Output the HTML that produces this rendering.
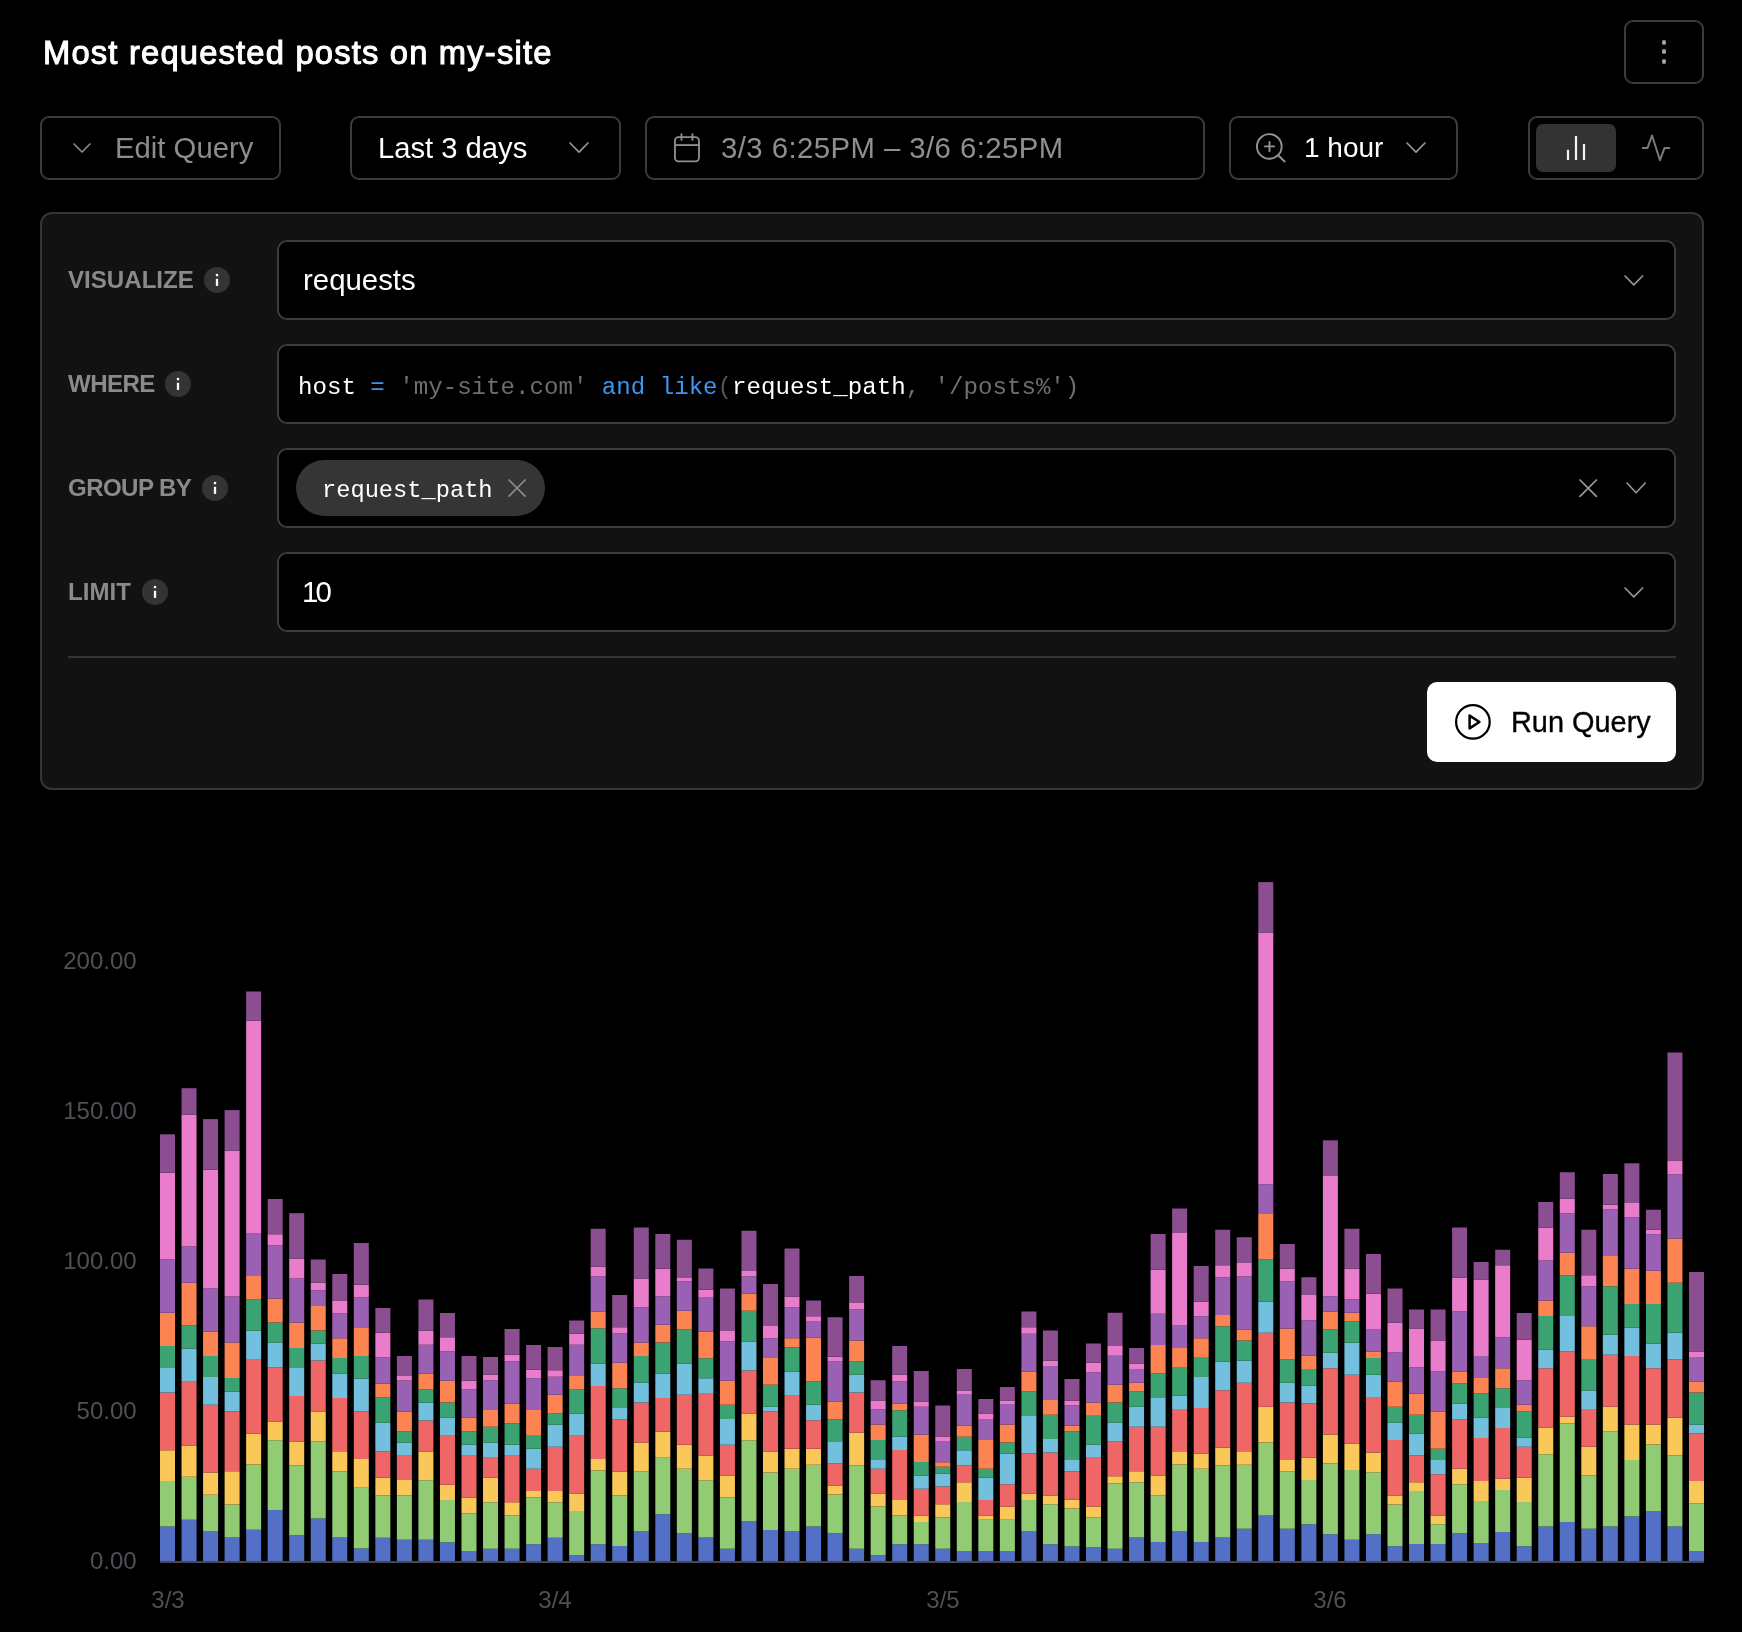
<!DOCTYPE html>
<html><head><meta charset="utf-8"><style>
html,body{margin:0;padding:0;background:#000;}
body{width:1742px;height:1632px;position:relative;overflow:hidden;font-family:"Liberation Sans",sans-serif;}
.t{position:absolute;white-space:nowrap;will-change:transform;}
.b{position:absolute;}
.i{position:absolute;overflow:visible;}
</style></head><body>
<div class="t" style="left:42.80px;top:36.72px;font-size:32.7px;line-height:32.7px;color:#ffffff;font-weight:400;font-family:'Liberation Sans', sans-serif;-webkit-text-stroke:1.05px #fff;letter-spacing:1.2px;">Most requested posts on my-site</div>
<div class="b" style="left:1624.00px;top:20.00px;width:80.00px;height:64.00px;border:2px solid #3b3b3b;border-radius:9px;box-sizing:border-box;"></div>
<div class="b" style="left:1661.55px;top:40.15px;width:4.9px;height:4.9px;border-radius:50%;background:#a4a4a4"></div>
<div class="b" style="left:1661.55px;top:49.45px;width:4.9px;height:4.9px;border-radius:50%;background:#a4a4a4"></div>
<div class="b" style="left:1661.55px;top:58.95px;width:4.9px;height:4.9px;border-radius:50%;background:#a4a4a4"></div>
<div class="b" style="left:40.00px;top:116.00px;width:241.00px;height:64.00px;border:2px solid #3b3b3b;border-radius:9px;box-sizing:border-box;"></div>
<svg class="i" style="left:71.00px;top:141.00px" width="22" height="14" viewBox="0 0 22 14" ><polyline points="3,3 11.0,11 19,3" fill="none" stroke="#8a8a8a" stroke-width="1.7" stroke-linecap="round" stroke-linejoin="round"/></svg>
<div class="t" style="left:115.00px;top:132.90px;font-size:29.3px;line-height:29.3px;color:#8c8c8c;font-weight:400;font-family:'Liberation Sans', sans-serif;">Edit Query</div>
<div class="b" style="left:350.00px;top:116.00px;width:271.00px;height:64.00px;border:2px solid #3b3b3b;border-radius:9px;box-sizing:border-box;"></div>
<div class="t" style="left:377.50px;top:133.58px;font-size:29.2px;line-height:29.2px;color:#ffffff;font-weight:400;font-family:'Liberation Sans', sans-serif;">Last 3 days</div>
<svg class="i" style="left:567.00px;top:140.10px" width="24" height="15.200000000000017" viewBox="0 0 24 15.200000000000017" ><polyline points="3,3 12.0,12.200000000000017 21,3" fill="none" stroke="#969696" stroke-width="1.65" stroke-linecap="round" stroke-linejoin="round"/></svg>
<div class="b" style="left:645.00px;top:116.00px;width:560.00px;height:64.00px;border:2px solid #3b3b3b;border-radius:9px;box-sizing:border-box;"></div>
<svg class="i" style="left:671.00px;top:132.00px" width="32" height="32" viewBox="0 0 32 32" ><rect x="3.95" y="5.1" width="24.05" height="24.3" rx="3.6" fill="none" stroke="#8f8f8f" stroke-width="1.85"/><line x1="4" y1="13.1" x2="28" y2="13.1" stroke="#8f8f8f" stroke-width="1.85"/><line x1="10.5" y1="2.2" x2="10.5" y2="7.9" stroke="#8f8f8f" stroke-width="1.85" stroke-linecap="round"/><line x1="21.4" y1="2.2" x2="21.4" y2="7.9" stroke="#8f8f8f" stroke-width="1.85" stroke-linecap="round"/></svg>
<div class="t" style="left:720.50px;top:133.00px;font-size:29.3px;line-height:29.3px;color:#8f8f8f;font-weight:400;font-family:'Liberation Sans', sans-serif;letter-spacing:0.45px;">3/3 6:25PM – 3/6 6:25PM</div>
<div class="b" style="left:1229.00px;top:116.00px;width:229.00px;height:64.00px;border:2px solid #3b3b3b;border-radius:9px;box-sizing:border-box;"></div>
<svg class="i" style="left:1254.00px;top:131.00px" width="32" height="32" viewBox="0 0 32 32" ><circle cx="15.3" cy="15.45" r="12.35" fill="none" stroke="#939393" stroke-width="1.9"/><line x1="24.1" y1="24.3" x2="30.6" y2="30.5" stroke="#939393" stroke-width="1.9" stroke-linecap="round"/><line x1="15.5" y1="10.85" x2="15.5" y2="20.35" stroke="#939393" stroke-width="1.9" stroke-linecap="round"/><line x1="10.75" y1="15.4" x2="20.15" y2="15.4" stroke="#939393" stroke-width="1.9" stroke-linecap="round"/></svg>
<div class="t" style="left:1303.50px;top:134.10px;font-size:28.0px;line-height:28.0px;color:#ffffff;font-weight:400;font-family:'Liberation Sans', sans-serif;">1 hour</div>
<svg class="i" style="left:1404.00px;top:140.10px" width="24" height="15.200000000000017" viewBox="0 0 24 15.200000000000017" ><polyline points="3,3 12.0,12.200000000000017 21,3" fill="none" stroke="#969696" stroke-width="1.65" stroke-linecap="round" stroke-linejoin="round"/></svg>
<div class="b" style="left:1528.00px;top:116.00px;width:176.00px;height:64.00px;border:2px solid #3b3b3b;border-radius:9px;box-sizing:border-box;"></div>
<div class="b" style="left:1536.00px;top:124.00px;width:80.00px;height:47.50px;background:#333333;border-radius:7px;"></div>
<svg class="i" style="left:1560.00px;top:130.00px" width="30" height="34" viewBox="1560 130 30 34" ><line x1="1568" y1="149.8" x2="1568" y2="160" stroke="#f2f2f2" stroke-width="2.2"/><line x1="1576" y1="136" x2="1576" y2="160" stroke="#f2f2f2" stroke-width="2.2"/><line x1="1584" y1="144" x2="1584" y2="160" stroke="#f2f2f2" stroke-width="2.2"/></svg>
<svg class="i" style="left:1636.00px;top:130.00px" width="40" height="34" viewBox="1636 130 40 34" ><polyline points="1642,148 1647.5,148 1652,135.5 1660,160.2 1664.5,148 1670,148" fill="none" stroke="#7a7a7a" stroke-width="2" stroke-linejoin="round" stroke-linecap="butt"/></svg>
<div class="b" style="left:40.00px;top:212.00px;width:1664.00px;height:577.50px;background:#121212;border:2px solid #353535;border-radius:12px;box-sizing:border-box;"></div>
<div class="b" style="left:276.50px;top:240.00px;width:1399.00px;height:80.00px;background:#000;border:2px solid #3c3c3c;border-radius:10px;box-sizing:border-box;"></div>
<div class="b" style="left:276.50px;top:344.00px;width:1399.00px;height:80.00px;background:#000;border:2px solid #3c3c3c;border-radius:10px;box-sizing:border-box;"></div>
<div class="b" style="left:276.50px;top:448.00px;width:1399.00px;height:80.00px;background:#000;border:2px solid #3c3c3c;border-radius:10px;box-sizing:border-box;"></div>
<div class="b" style="left:276.50px;top:552.00px;width:1399.00px;height:80.00px;background:#000;border:2px solid #3c3c3c;border-radius:10px;box-sizing:border-box;"></div>
<div class="t" style="left:68.30px;top:268.00px;font-size:24.1px;line-height:24.1px;color:#8a8a8a;font-weight:700;font-family:'Liberation Sans', sans-serif;">VISUALIZE</div>
<svg class="i" style="left:204.00px;top:267.00px" width="26" height="26" viewBox="0 0 26 26" ><circle cx="13" cy="13" r="13" fill="#343434"/><rect x="11.85" y="11.8" width="2.3" height="7.1" fill="#ffffff"/><rect x="11.85" y="6.9" width="2.3" height="2.3" fill="#ffffff"/></svg>
<div class="t" style="left:68.30px;top:371.90px;font-size:24.1px;line-height:24.1px;color:#8a8a8a;font-weight:700;font-family:'Liberation Sans', sans-serif;letter-spacing:-0.6px;">WHERE</div>
<svg class="i" style="left:165.00px;top:370.70px" width="26" height="26" viewBox="0 0 26 26" ><circle cx="13" cy="13" r="13" fill="#343434"/><rect x="11.85" y="11.8" width="2.3" height="7.1" fill="#ffffff"/><rect x="11.85" y="6.9" width="2.3" height="2.3" fill="#ffffff"/></svg>
<div class="t" style="left:68.30px;top:475.70px;font-size:24.1px;line-height:24.1px;color:#8a8a8a;font-weight:700;font-family:'Liberation Sans', sans-serif;letter-spacing:-0.6px;">GROUP BY</div>
<svg class="i" style="left:202.00px;top:475.00px" width="26" height="26" viewBox="0 0 26 26" ><circle cx="13" cy="13" r="13" fill="#343434"/><rect x="11.85" y="11.8" width="2.3" height="7.1" fill="#ffffff"/><rect x="11.85" y="6.9" width="2.3" height="2.3" fill="#ffffff"/></svg>
<div class="t" style="left:68.30px;top:580.20px;font-size:24.1px;line-height:24.1px;color:#8a8a8a;font-weight:700;font-family:'Liberation Sans', sans-serif;">LIMIT</div>
<svg class="i" style="left:142.00px;top:579.00px" width="26" height="26" viewBox="0 0 26 26" ><circle cx="13" cy="13" r="13" fill="#343434"/><rect x="11.85" y="11.8" width="2.3" height="7.1" fill="#ffffff"/><rect x="11.85" y="6.9" width="2.3" height="2.3" fill="#ffffff"/></svg>
<div class="t" style="left:303.00px;top:265.31px;font-size:29.4px;line-height:29.4px;color:#ffffff;font-weight:400;font-family:'Liberation Sans', sans-serif;">requests</div>
<svg class="i" style="left:1622.30px;top:272.60px" width="23.600000000000136" height="14.899999999999977" viewBox="0 0 23.600000000000136 14.899999999999977" ><polyline points="3,3 11.800000000000068,11.899999999999977 20.600000000000136,3" fill="none" stroke="#969696" stroke-width="1.65" stroke-linecap="round" stroke-linejoin="round"/></svg>
<div class="t" style="left:297.50px;top:375.91px;font-size:24.12px;line-height:24.12px;color:#fff;font-weight:400;font-family:'Liberation Mono', monospace;white-space:pre;"><span style="color:#ffffff">host</span> <span style="color:#3d95f2">=</span> <span style="color:#6e6e6e">'my-site.com'</span> <span style="color:#3d95f2">and</span> <span style="color:#3d95f2">like</span><span style="color:#555">(</span><span style="color:#fff">request_path</span><span style="color:#6e6e6e">, '/posts%')</span></div>
<div class="b" style="left:296.00px;top:460.00px;width:249.00px;height:56.00px;background:#353535;border-radius:28px;"></div>
<div class="t" style="left:321.50px;top:478.83px;font-size:23.7px;line-height:23.7px;color:#ffffff;font-weight:400;font-family:'Liberation Mono', monospace;white-space:pre;">request_path</div>
<svg class="i" style="left:506.20px;top:477.20px" width="22.099999999999966" height="22.100000000000023" viewBox="0 0 22.099999999999966 22.100000000000023" ><path d="M3,3 L19.099999999999966,19.100000000000023 M19.099999999999966,3 L3,19.100000000000023" fill="none" stroke="#8c8c8c" stroke-width="1.7" stroke-linecap="round"/></svg>
<svg class="i" style="left:1576.80px;top:476.80px" width="22.40000000000009" height="22.399999999999977" viewBox="0 0 22.40000000000009 22.399999999999977" ><path d="M3,3 L19.40000000000009,19.399999999999977 M19.40000000000009,3 L3,19.399999999999977" fill="none" stroke="#9a9a9a" stroke-width="1.7" stroke-linecap="round"/></svg>
<svg class="i" style="left:1623.80px;top:480.20px" width="24.200000000000045" height="15.699999999999989" viewBox="0 0 24.200000000000045 15.699999999999989" ><polyline points="3,3 12.100000000000023,12.699999999999989 21.200000000000045,3" fill="none" stroke="#969696" stroke-width="1.65" stroke-linecap="round" stroke-linejoin="round"/></svg>
<div class="t" style="left:301.50px;top:576.61px;font-size:29.4px;line-height:29.4px;color:#ffffff;font-weight:400;font-family:'Liberation Sans', sans-serif;letter-spacing:-2.8px;">10</div>
<svg class="i" style="left:1622.30px;top:584.60px" width="23.600000000000136" height="14.899999999999977" viewBox="0 0 23.600000000000136 14.899999999999977" ><polyline points="3,3 11.800000000000068,11.899999999999977 20.600000000000136,3" fill="none" stroke="#969696" stroke-width="1.65" stroke-linecap="round" stroke-linejoin="round"/></svg>
<div class="b" style="left:68.00px;top:656.00px;width:1608.00px;height:2.00px;background:#353535;"></div>
<div class="b" style="left:1427.00px;top:682.00px;width:249.00px;height:80.00px;background:#ffffff;border-radius:10px;"></div>
<svg class="i" style="left:1454.00px;top:703.00px" width="38" height="38" viewBox="0 0 38 38" ><circle cx="18.9" cy="18.9" r="16.8" fill="none" stroke="#000" stroke-width="2.25"/><path d="M15.6,12.6 L25.4,19 L15.6,25.4 Z" fill="none" stroke="#000" stroke-width="2.5" stroke-linejoin="round"/></svg>
<div class="t" style="left:1510.50px;top:707.84px;font-size:28.9px;line-height:28.9px;color:#000000;font-weight:400;font-family:'Liberation Sans', sans-serif;-webkit-text-stroke:0.35px #000;">Run Query</div>
<div class="t" style="left:0px;width:136.6px;text-align:right;top:1548.50px;font-size:24px;line-height:24px;color:#524e56;font-family:'Liberation Sans',sans-serif">0.00</div>
<div class="t" style="left:0px;width:136.6px;text-align:right;top:1398.50px;font-size:24px;line-height:24px;color:#524e56;font-family:'Liberation Sans',sans-serif">50.00</div>
<div class="t" style="left:0px;width:136.6px;text-align:right;top:1248.50px;font-size:24px;line-height:24px;color:#524e56;font-family:'Liberation Sans',sans-serif">100.00</div>
<div class="t" style="left:0px;width:136.6px;text-align:right;top:1098.50px;font-size:24px;line-height:24px;color:#524e56;font-family:'Liberation Sans',sans-serif">150.00</div>
<div class="t" style="left:0px;width:136.6px;text-align:right;top:948.50px;font-size:24px;line-height:24px;color:#524e56;font-family:'Liberation Sans',sans-serif">200.00</div>
<svg class="i" style="left:0;top:0" width="1742" height="1632"><rect x="160.00" y="1526.50" width="15.0" height="34.50" fill="#5470c6"/><rect x="160.00" y="1481.00" width="15.0" height="45.50" fill="#91cc75"/><rect x="160.00" y="1450.25" width="15.0" height="30.75" fill="#fac858"/><rect x="160.00" y="1392.50" width="15.0" height="57.75" fill="#ee6666"/><rect x="160.00" y="1367.25" width="15.0" height="25.25" fill="#73c0de"/><rect x="160.00" y="1346.00" width="15.0" height="21.25" fill="#3ba272"/><rect x="160.00" y="1312.75" width="15.0" height="33.25" fill="#fc8452"/><rect x="160.00" y="1259.25" width="15.0" height="53.50" fill="#9a60b4"/><rect x="160.00" y="1172.60" width="15.0" height="86.65" fill="#ea7ccc"/><rect x="160.00" y="1134.30" width="15.0" height="38.30" fill="#8b4e91"/><rect x="181.53" y="1519.75" width="15.0" height="41.25" fill="#5470c6"/><rect x="181.53" y="1476.75" width="15.0" height="43.00" fill="#91cc75"/><rect x="181.53" y="1445.50" width="15.0" height="31.25" fill="#fac858"/><rect x="181.53" y="1381.75" width="15.0" height="63.75" fill="#ee6666"/><rect x="181.53" y="1348.50" width="15.0" height="33.25" fill="#73c0de"/><rect x="181.53" y="1325.25" width="15.0" height="23.25" fill="#3ba272"/><rect x="181.53" y="1282.75" width="15.0" height="42.50" fill="#fc8452"/><rect x="181.53" y="1246.50" width="15.0" height="36.25" fill="#9a60b4"/><rect x="181.53" y="1114.60" width="15.0" height="131.90" fill="#ea7ccc"/><rect x="181.53" y="1088.20" width="15.0" height="26.40" fill="#8b4e91"/><rect x="203.07" y="1531.00" width="15.0" height="30.00" fill="#5470c6"/><rect x="203.07" y="1494.75" width="15.0" height="36.25" fill="#91cc75"/><rect x="203.07" y="1472.50" width="15.0" height="22.25" fill="#fac858"/><rect x="203.07" y="1404.75" width="15.0" height="67.75" fill="#ee6666"/><rect x="203.07" y="1377.00" width="15.0" height="27.75" fill="#73c0de"/><rect x="203.07" y="1356.00" width="15.0" height="21.00" fill="#3ba272"/><rect x="203.07" y="1331.75" width="15.0" height="24.25" fill="#fc8452"/><rect x="203.07" y="1288.50" width="15.0" height="43.25" fill="#9a60b4"/><rect x="203.07" y="1169.75" width="15.0" height="118.75" fill="#ea7ccc"/><rect x="203.07" y="1119.10" width="15.0" height="50.65" fill="#8b4e91"/><rect x="224.61" y="1537.50" width="15.0" height="23.50" fill="#5470c6"/><rect x="224.61" y="1504.50" width="15.0" height="33.00" fill="#91cc75"/><rect x="224.61" y="1471.25" width="15.0" height="33.25" fill="#fac858"/><rect x="224.61" y="1411.50" width="15.0" height="59.75" fill="#ee6666"/><rect x="224.61" y="1391.50" width="15.0" height="20.00" fill="#73c0de"/><rect x="224.61" y="1378.00" width="15.0" height="13.50" fill="#3ba272"/><rect x="224.61" y="1342.50" width="15.0" height="35.50" fill="#fc8452"/><rect x="224.61" y="1296.50" width="15.0" height="46.00" fill="#9a60b4"/><rect x="224.61" y="1150.80" width="15.0" height="145.70" fill="#ea7ccc"/><rect x="224.61" y="1110.10" width="15.0" height="40.70" fill="#8b4e91"/><rect x="246.14" y="1529.75" width="15.0" height="31.25" fill="#5470c6"/><rect x="246.14" y="1464.50" width="15.0" height="65.25" fill="#91cc75"/><rect x="246.14" y="1433.50" width="15.0" height="31.00" fill="#fac858"/><rect x="246.14" y="1359.75" width="15.0" height="73.75" fill="#ee6666"/><rect x="246.14" y="1330.75" width="15.0" height="29.00" fill="#73c0de"/><rect x="246.14" y="1299.50" width="15.0" height="31.25" fill="#3ba272"/><rect x="246.14" y="1275.25" width="15.0" height="24.25" fill="#fc8452"/><rect x="246.14" y="1233.00" width="15.0" height="42.25" fill="#9a60b4"/><rect x="246.14" y="1020.60" width="15.0" height="212.40" fill="#ea7ccc"/><rect x="246.14" y="991.50" width="15.0" height="29.10" fill="#8b4e91"/><rect x="267.68" y="1510.00" width="15.0" height="51.00" fill="#5470c6"/><rect x="267.68" y="1440.25" width="15.0" height="69.75" fill="#91cc75"/><rect x="267.68" y="1421.50" width="15.0" height="18.75" fill="#fac858"/><rect x="267.68" y="1367.25" width="15.0" height="54.25" fill="#ee6666"/><rect x="267.68" y="1342.50" width="15.0" height="24.75" fill="#73c0de"/><rect x="267.68" y="1322.50" width="15.0" height="20.00" fill="#3ba272"/><rect x="267.68" y="1298.50" width="15.0" height="24.00" fill="#fc8452"/><rect x="267.68" y="1245.25" width="15.0" height="53.25" fill="#9a60b4"/><rect x="267.68" y="1234.25" width="15.0" height="11.00" fill="#ea7ccc"/><rect x="267.68" y="1199.00" width="15.0" height="35.25" fill="#8b4e91"/><rect x="289.21" y="1535.25" width="15.0" height="25.75" fill="#5470c6"/><rect x="289.21" y="1465.50" width="15.0" height="69.75" fill="#91cc75"/><rect x="289.21" y="1441.50" width="15.0" height="24.00" fill="#fac858"/><rect x="289.21" y="1396.00" width="15.0" height="45.50" fill="#ee6666"/><rect x="289.21" y="1367.25" width="15.0" height="28.75" fill="#73c0de"/><rect x="289.21" y="1348.00" width="15.0" height="19.25" fill="#3ba272"/><rect x="289.21" y="1322.50" width="15.0" height="25.50" fill="#fc8452"/><rect x="289.21" y="1278.50" width="15.0" height="44.00" fill="#9a60b4"/><rect x="289.21" y="1258.50" width="15.0" height="20.00" fill="#ea7ccc"/><rect x="289.21" y="1213.20" width="15.0" height="45.30" fill="#8b4e91"/><rect x="310.75" y="1518.50" width="15.0" height="42.50" fill="#5470c6"/><rect x="310.75" y="1441.25" width="15.0" height="77.25" fill="#91cc75"/><rect x="310.75" y="1411.50" width="15.0" height="29.75" fill="#fac858"/><rect x="310.75" y="1360.50" width="15.0" height="51.00" fill="#ee6666"/><rect x="310.75" y="1343.50" width="15.0" height="17.00" fill="#73c0de"/><rect x="310.75" y="1330.50" width="15.0" height="13.00" fill="#3ba272"/><rect x="310.75" y="1306.00" width="15.0" height="24.50" fill="#fc8452"/><rect x="310.75" y="1290.25" width="15.0" height="15.75" fill="#9a60b4"/><rect x="310.75" y="1282.75" width="15.0" height="7.50" fill="#ea7ccc"/><rect x="310.75" y="1259.50" width="15.0" height="23.25" fill="#8b4e91"/><rect x="332.28" y="1537.50" width="15.0" height="23.50" fill="#5470c6"/><rect x="332.28" y="1471.50" width="15.0" height="66.00" fill="#91cc75"/><rect x="332.28" y="1451.25" width="15.0" height="20.25" fill="#fac858"/><rect x="332.28" y="1398.00" width="15.0" height="53.25" fill="#ee6666"/><rect x="332.28" y="1373.50" width="15.0" height="24.50" fill="#73c0de"/><rect x="332.28" y="1358.00" width="15.0" height="15.50" fill="#3ba272"/><rect x="332.28" y="1338.25" width="15.0" height="19.75" fill="#fc8452"/><rect x="332.28" y="1313.50" width="15.0" height="24.75" fill="#9a60b4"/><rect x="332.28" y="1300.50" width="15.0" height="13.00" fill="#ea7ccc"/><rect x="332.28" y="1274.00" width="15.0" height="26.50" fill="#8b4e91"/><rect x="353.81" y="1548.50" width="15.0" height="12.50" fill="#5470c6"/><rect x="353.81" y="1487.75" width="15.0" height="60.75" fill="#91cc75"/><rect x="353.81" y="1459.00" width="15.0" height="28.75" fill="#fac858"/><rect x="353.81" y="1411.25" width="15.0" height="47.75" fill="#ee6666"/><rect x="353.81" y="1378.50" width="15.0" height="32.75" fill="#73c0de"/><rect x="353.81" y="1356.00" width="15.0" height="22.50" fill="#3ba272"/><rect x="353.81" y="1327.25" width="15.0" height="28.75" fill="#fc8452"/><rect x="353.81" y="1297.25" width="15.0" height="30.00" fill="#9a60b4"/><rect x="353.81" y="1284.75" width="15.0" height="12.50" fill="#ea7ccc"/><rect x="353.81" y="1243.00" width="15.0" height="41.75" fill="#8b4e91"/><rect x="375.35" y="1537.75" width="15.0" height="23.25" fill="#5470c6"/><rect x="375.35" y="1495.50" width="15.0" height="42.25" fill="#91cc75"/><rect x="375.35" y="1477.75" width="15.0" height="17.75" fill="#fac858"/><rect x="375.35" y="1451.50" width="15.0" height="26.25" fill="#ee6666"/><rect x="375.35" y="1422.75" width="15.0" height="28.75" fill="#73c0de"/><rect x="375.35" y="1397.25" width="15.0" height="25.50" fill="#3ba272"/><rect x="375.35" y="1383.75" width="15.0" height="13.50" fill="#fc8452"/><rect x="375.35" y="1357.25" width="15.0" height="26.50" fill="#9a60b4"/><rect x="375.35" y="1332.75" width="15.0" height="24.50" fill="#ea7ccc"/><rect x="375.35" y="1308.00" width="15.0" height="24.75" fill="#8b4e91"/><rect x="396.88" y="1539.75" width="15.0" height="21.25" fill="#5470c6"/><rect x="396.88" y="1495.50" width="15.0" height="44.25" fill="#91cc75"/><rect x="396.88" y="1480.00" width="15.0" height="15.50" fill="#fac858"/><rect x="396.88" y="1455.75" width="15.0" height="24.25" fill="#ee6666"/><rect x="396.88" y="1442.75" width="15.0" height="13.00" fill="#73c0de"/><rect x="396.88" y="1431.25" width="15.0" height="11.50" fill="#3ba272"/><rect x="396.88" y="1411.50" width="15.0" height="19.75" fill="#fc8452"/><rect x="396.88" y="1380.50" width="15.0" height="31.00" fill="#9a60b4"/><rect x="396.88" y="1376.00" width="15.0" height="4.50" fill="#ea7ccc"/><rect x="396.88" y="1356.00" width="15.0" height="20.00" fill="#8b4e91"/><rect x="418.42" y="1539.75" width="15.0" height="21.25" fill="#5470c6"/><rect x="418.42" y="1480.25" width="15.0" height="59.50" fill="#91cc75"/><rect x="418.42" y="1451.50" width="15.0" height="28.75" fill="#fac858"/><rect x="418.42" y="1420.50" width="15.0" height="31.00" fill="#ee6666"/><rect x="418.42" y="1402.75" width="15.0" height="17.75" fill="#73c0de"/><rect x="418.42" y="1389.50" width="15.0" height="13.25" fill="#3ba272"/><rect x="418.42" y="1373.75" width="15.0" height="15.75" fill="#fc8452"/><rect x="418.42" y="1344.75" width="15.0" height="29.00" fill="#9a60b4"/><rect x="418.42" y="1330.75" width="15.0" height="14.00" fill="#ea7ccc"/><rect x="418.42" y="1299.50" width="15.0" height="31.25" fill="#8b4e91"/><rect x="439.95" y="1542.25" width="15.0" height="18.75" fill="#5470c6"/><rect x="439.95" y="1500.00" width="15.0" height="42.25" fill="#91cc75"/><rect x="439.95" y="1484.75" width="15.0" height="15.25" fill="#fac858"/><rect x="439.95" y="1435.75" width="15.0" height="49.00" fill="#ee6666"/><rect x="439.95" y="1417.75" width="15.0" height="18.00" fill="#73c0de"/><rect x="439.95" y="1402.50" width="15.0" height="15.25" fill="#3ba272"/><rect x="439.95" y="1380.75" width="15.0" height="21.75" fill="#fc8452"/><rect x="439.95" y="1351.25" width="15.0" height="29.50" fill="#9a60b4"/><rect x="439.95" y="1337.25" width="15.0" height="14.00" fill="#ea7ccc"/><rect x="439.95" y="1313.00" width="15.0" height="24.25" fill="#8b4e91"/><rect x="461.49" y="1551.00" width="15.0" height="10.00" fill="#5470c6"/><rect x="461.49" y="1513.50" width="15.0" height="37.50" fill="#91cc75"/><rect x="461.49" y="1497.50" width="15.0" height="16.00" fill="#fac858"/><rect x="461.49" y="1455.75" width="15.0" height="41.75" fill="#ee6666"/><rect x="461.49" y="1444.50" width="15.0" height="11.25" fill="#73c0de"/><rect x="461.49" y="1431.25" width="15.0" height="13.25" fill="#3ba272"/><rect x="461.49" y="1417.75" width="15.0" height="13.50" fill="#fc8452"/><rect x="461.49" y="1389.25" width="15.0" height="28.50" fill="#9a60b4"/><rect x="461.49" y="1380.75" width="15.0" height="8.50" fill="#ea7ccc"/><rect x="461.49" y="1356.00" width="15.0" height="24.75" fill="#8b4e91"/><rect x="483.02" y="1548.75" width="15.0" height="12.25" fill="#5470c6"/><rect x="483.02" y="1502.25" width="15.0" height="46.50" fill="#91cc75"/><rect x="483.02" y="1477.75" width="15.0" height="24.50" fill="#fac858"/><rect x="483.02" y="1457.75" width="15.0" height="20.00" fill="#ee6666"/><rect x="483.02" y="1442.75" width="15.0" height="15.00" fill="#73c0de"/><rect x="483.02" y="1426.75" width="15.0" height="16.00" fill="#3ba272"/><rect x="483.02" y="1409.25" width="15.0" height="17.50" fill="#fc8452"/><rect x="483.02" y="1380.25" width="15.0" height="29.00" fill="#9a60b4"/><rect x="483.02" y="1374.75" width="15.0" height="5.50" fill="#ea7ccc"/><rect x="483.02" y="1357.00" width="15.0" height="17.75" fill="#8b4e91"/><rect x="504.56" y="1548.75" width="15.0" height="12.25" fill="#5470c6"/><rect x="504.56" y="1515.50" width="15.0" height="33.25" fill="#91cc75"/><rect x="504.56" y="1502.25" width="15.0" height="13.25" fill="#fac858"/><rect x="504.56" y="1455.75" width="15.0" height="46.50" fill="#ee6666"/><rect x="504.56" y="1444.75" width="15.0" height="11.00" fill="#73c0de"/><rect x="504.56" y="1423.50" width="15.0" height="21.25" fill="#3ba272"/><rect x="504.56" y="1403.75" width="15.0" height="19.75" fill="#fc8452"/><rect x="504.56" y="1361.25" width="15.0" height="42.50" fill="#9a60b4"/><rect x="504.56" y="1354.75" width="15.0" height="6.50" fill="#ea7ccc"/><rect x="504.56" y="1329.00" width="15.0" height="25.75" fill="#8b4e91"/><rect x="526.10" y="1544.25" width="15.0" height="16.75" fill="#5470c6"/><rect x="526.10" y="1497.50" width="15.0" height="46.75" fill="#91cc75"/><rect x="526.10" y="1491.00" width="15.0" height="6.50" fill="#fac858"/><rect x="526.10" y="1468.75" width="15.0" height="22.25" fill="#ee6666"/><rect x="526.10" y="1448.75" width="15.0" height="20.00" fill="#73c0de"/><rect x="526.10" y="1435.75" width="15.0" height="13.00" fill="#3ba272"/><rect x="526.10" y="1409.25" width="15.0" height="26.50" fill="#fc8452"/><rect x="526.10" y="1378.25" width="15.0" height="31.00" fill="#9a60b4"/><rect x="526.10" y="1369.75" width="15.0" height="8.50" fill="#ea7ccc"/><rect x="526.10" y="1345.00" width="15.0" height="24.75" fill="#8b4e91"/><rect x="547.63" y="1537.75" width="15.0" height="23.25" fill="#5470c6"/><rect x="547.63" y="1502.25" width="15.0" height="35.50" fill="#91cc75"/><rect x="547.63" y="1491.00" width="15.0" height="11.25" fill="#fac858"/><rect x="547.63" y="1446.75" width="15.0" height="44.25" fill="#ee6666"/><rect x="547.63" y="1424.75" width="15.0" height="22.00" fill="#73c0de"/><rect x="547.63" y="1413.50" width="15.0" height="11.25" fill="#3ba272"/><rect x="547.63" y="1394.75" width="15.0" height="18.75" fill="#fc8452"/><rect x="547.63" y="1376.75" width="15.0" height="18.00" fill="#9a60b4"/><rect x="547.63" y="1370.25" width="15.0" height="6.50" fill="#ea7ccc"/><rect x="547.63" y="1347.00" width="15.0" height="23.25" fill="#8b4e91"/><rect x="569.16" y="1555.25" width="15.0" height="5.75" fill="#5470c6"/><rect x="569.16" y="1511.00" width="15.0" height="44.25" fill="#91cc75"/><rect x="569.16" y="1493.50" width="15.0" height="17.50" fill="#fac858"/><rect x="569.16" y="1435.75" width="15.0" height="57.75" fill="#ee6666"/><rect x="569.16" y="1413.50" width="15.0" height="22.25" fill="#73c0de"/><rect x="569.16" y="1389.50" width="15.0" height="24.00" fill="#3ba272"/><rect x="569.16" y="1376.00" width="15.0" height="13.50" fill="#fc8452"/><rect x="569.16" y="1344.75" width="15.0" height="31.25" fill="#9a60b4"/><rect x="569.16" y="1333.75" width="15.0" height="11.00" fill="#ea7ccc"/><rect x="569.16" y="1320.50" width="15.0" height="13.25" fill="#8b4e91"/><rect x="590.70" y="1544.25" width="15.0" height="16.75" fill="#5470c6"/><rect x="590.70" y="1470.50" width="15.0" height="73.75" fill="#91cc75"/><rect x="590.70" y="1459.00" width="15.0" height="11.50" fill="#fac858"/><rect x="590.70" y="1386.00" width="15.0" height="73.00" fill="#ee6666"/><rect x="590.70" y="1363.75" width="15.0" height="22.25" fill="#73c0de"/><rect x="590.70" y="1328.25" width="15.0" height="35.50" fill="#3ba272"/><rect x="590.70" y="1311.75" width="15.0" height="16.50" fill="#fc8452"/><rect x="590.70" y="1276.25" width="15.0" height="35.50" fill="#9a60b4"/><rect x="590.70" y="1266.75" width="15.0" height="9.50" fill="#ea7ccc"/><rect x="590.70" y="1228.75" width="15.0" height="38.00" fill="#8b4e91"/><rect x="612.24" y="1546.00" width="15.0" height="15.00" fill="#5470c6"/><rect x="612.24" y="1495.50" width="15.0" height="50.50" fill="#91cc75"/><rect x="612.24" y="1471.50" width="15.0" height="24.00" fill="#fac858"/><rect x="612.24" y="1419.25" width="15.0" height="52.25" fill="#ee6666"/><rect x="612.24" y="1408.00" width="15.0" height="11.25" fill="#73c0de"/><rect x="612.24" y="1388.25" width="15.0" height="19.75" fill="#3ba272"/><rect x="612.24" y="1362.75" width="15.0" height="25.50" fill="#fc8452"/><rect x="612.24" y="1333.50" width="15.0" height="29.25" fill="#9a60b4"/><rect x="612.24" y="1327.25" width="15.0" height="6.25" fill="#ea7ccc"/><rect x="612.24" y="1295.00" width="15.0" height="32.25" fill="#8b4e91"/><rect x="633.77" y="1531.00" width="15.0" height="30.00" fill="#5470c6"/><rect x="633.77" y="1471.25" width="15.0" height="59.75" fill="#91cc75"/><rect x="633.77" y="1442.50" width="15.0" height="28.75" fill="#fac858"/><rect x="633.77" y="1402.50" width="15.0" height="40.00" fill="#ee6666"/><rect x="633.77" y="1382.50" width="15.0" height="20.00" fill="#73c0de"/><rect x="633.77" y="1356.00" width="15.0" height="26.50" fill="#3ba272"/><rect x="633.77" y="1342.50" width="15.0" height="13.50" fill="#fc8452"/><rect x="633.77" y="1307.25" width="15.0" height="35.25" fill="#9a60b4"/><rect x="633.77" y="1278.50" width="15.0" height="28.75" fill="#ea7ccc"/><rect x="633.77" y="1227.50" width="15.0" height="51.00" fill="#8b4e91"/><rect x="655.31" y="1514.25" width="15.0" height="46.75" fill="#5470c6"/><rect x="655.31" y="1457.75" width="15.0" height="56.50" fill="#91cc75"/><rect x="655.31" y="1431.75" width="15.0" height="26.00" fill="#fac858"/><rect x="655.31" y="1398.00" width="15.0" height="33.75" fill="#ee6666"/><rect x="655.31" y="1373.75" width="15.0" height="24.25" fill="#73c0de"/><rect x="655.31" y="1342.50" width="15.0" height="31.25" fill="#3ba272"/><rect x="655.31" y="1324.75" width="15.0" height="17.75" fill="#fc8452"/><rect x="655.31" y="1296.25" width="15.0" height="28.50" fill="#9a60b4"/><rect x="655.31" y="1268.75" width="15.0" height="27.50" fill="#ea7ccc"/><rect x="655.31" y="1234.00" width="15.0" height="34.75" fill="#8b4e91"/><rect x="676.84" y="1533.25" width="15.0" height="27.75" fill="#5470c6"/><rect x="676.84" y="1468.75" width="15.0" height="64.50" fill="#91cc75"/><rect x="676.84" y="1444.75" width="15.0" height="24.00" fill="#fac858"/><rect x="676.84" y="1394.75" width="15.0" height="50.00" fill="#ee6666"/><rect x="676.84" y="1363.75" width="15.0" height="31.00" fill="#73c0de"/><rect x="676.84" y="1329.50" width="15.0" height="34.25" fill="#3ba272"/><rect x="676.84" y="1310.75" width="15.0" height="18.75" fill="#fc8452"/><rect x="676.84" y="1281.25" width="15.0" height="29.50" fill="#9a60b4"/><rect x="676.84" y="1278.00" width="15.0" height="3.25" fill="#ea7ccc"/><rect x="676.84" y="1239.75" width="15.0" height="38.25" fill="#8b4e91"/><rect x="698.38" y="1537.50" width="15.0" height="23.50" fill="#5470c6"/><rect x="698.38" y="1480.25" width="15.0" height="57.25" fill="#91cc75"/><rect x="698.38" y="1455.50" width="15.0" height="24.75" fill="#fac858"/><rect x="698.38" y="1393.75" width="15.0" height="61.75" fill="#ee6666"/><rect x="698.38" y="1378.25" width="15.0" height="15.50" fill="#73c0de"/><rect x="698.38" y="1358.25" width="15.0" height="20.00" fill="#3ba272"/><rect x="698.38" y="1331.75" width="15.0" height="26.50" fill="#fc8452"/><rect x="698.38" y="1297.00" width="15.0" height="34.75" fill="#9a60b4"/><rect x="698.38" y="1289.75" width="15.0" height="7.25" fill="#ea7ccc"/><rect x="698.38" y="1268.50" width="15.0" height="21.25" fill="#8b4e91"/><rect x="719.91" y="1548.75" width="15.0" height="12.25" fill="#5470c6"/><rect x="719.91" y="1497.50" width="15.0" height="51.25" fill="#91cc75"/><rect x="719.91" y="1475.50" width="15.0" height="22.00" fill="#fac858"/><rect x="719.91" y="1444.75" width="15.0" height="30.75" fill="#ee6666"/><rect x="719.91" y="1419.00" width="15.0" height="25.75" fill="#73c0de"/><rect x="719.91" y="1404.75" width="15.0" height="14.25" fill="#3ba272"/><rect x="719.91" y="1380.75" width="15.0" height="24.00" fill="#fc8452"/><rect x="719.91" y="1341.25" width="15.0" height="39.50" fill="#9a60b4"/><rect x="719.91" y="1331.00" width="15.0" height="10.25" fill="#ea7ccc"/><rect x="719.91" y="1288.50" width="15.0" height="42.50" fill="#8b4e91"/><rect x="741.45" y="1521.00" width="15.0" height="40.00" fill="#5470c6"/><rect x="741.45" y="1440.25" width="15.0" height="80.75" fill="#91cc75"/><rect x="741.45" y="1413.50" width="15.0" height="26.75" fill="#fac858"/><rect x="741.45" y="1370.50" width="15.0" height="43.00" fill="#ee6666"/><rect x="741.45" y="1341.75" width="15.0" height="28.75" fill="#73c0de"/><rect x="741.45" y="1310.75" width="15.0" height="31.00" fill="#3ba272"/><rect x="741.45" y="1293.75" width="15.0" height="17.00" fill="#fc8452"/><rect x="741.45" y="1276.25" width="15.0" height="17.50" fill="#9a60b4"/><rect x="741.45" y="1271.00" width="15.0" height="5.25" fill="#ea7ccc"/><rect x="741.45" y="1230.75" width="15.0" height="40.25" fill="#8b4e91"/><rect x="762.98" y="1530.00" width="15.0" height="31.00" fill="#5470c6"/><rect x="762.98" y="1472.50" width="15.0" height="57.50" fill="#91cc75"/><rect x="762.98" y="1451.50" width="15.0" height="21.00" fill="#fac858"/><rect x="762.98" y="1411.50" width="15.0" height="40.00" fill="#ee6666"/><rect x="762.98" y="1406.75" width="15.0" height="4.75" fill="#73c0de"/><rect x="762.98" y="1384.75" width="15.0" height="22.00" fill="#3ba272"/><rect x="762.98" y="1357.25" width="15.0" height="27.50" fill="#fc8452"/><rect x="762.98" y="1338.25" width="15.0" height="19.00" fill="#9a60b4"/><rect x="762.98" y="1326.00" width="15.0" height="12.25" fill="#ea7ccc"/><rect x="762.98" y="1284.00" width="15.0" height="42.00" fill="#8b4e91"/><rect x="784.51" y="1531.00" width="15.0" height="30.00" fill="#5470c6"/><rect x="784.51" y="1468.75" width="15.0" height="62.25" fill="#91cc75"/><rect x="784.51" y="1448.75" width="15.0" height="20.00" fill="#fac858"/><rect x="784.51" y="1395.75" width="15.0" height="53.00" fill="#ee6666"/><rect x="784.51" y="1371.50" width="15.0" height="24.25" fill="#73c0de"/><rect x="784.51" y="1347.25" width="15.0" height="24.25" fill="#3ba272"/><rect x="784.51" y="1338.25" width="15.0" height="9.00" fill="#fc8452"/><rect x="784.51" y="1307.25" width="15.0" height="31.00" fill="#9a60b4"/><rect x="784.51" y="1296.50" width="15.0" height="10.75" fill="#ea7ccc"/><rect x="784.51" y="1248.50" width="15.0" height="48.00" fill="#8b4e91"/><rect x="806.05" y="1526.50" width="15.0" height="34.50" fill="#5470c6"/><rect x="806.05" y="1464.75" width="15.0" height="61.75" fill="#91cc75"/><rect x="806.05" y="1448.75" width="15.0" height="16.00" fill="#fac858"/><rect x="806.05" y="1420.25" width="15.0" height="28.50" fill="#ee6666"/><rect x="806.05" y="1404.75" width="15.0" height="15.50" fill="#73c0de"/><rect x="806.05" y="1381.50" width="15.0" height="23.25" fill="#3ba272"/><rect x="806.05" y="1337.50" width="15.0" height="44.00" fill="#fc8452"/><rect x="806.05" y="1321.00" width="15.0" height="16.50" fill="#9a60b4"/><rect x="806.05" y="1316.25" width="15.0" height="4.75" fill="#ea7ccc"/><rect x="806.05" y="1300.50" width="15.0" height="15.75" fill="#8b4e91"/><rect x="827.59" y="1533.25" width="15.0" height="27.75" fill="#5470c6"/><rect x="827.59" y="1494.50" width="15.0" height="38.75" fill="#91cc75"/><rect x="827.59" y="1485.50" width="15.0" height="9.00" fill="#fac858"/><rect x="827.59" y="1463.50" width="15.0" height="22.00" fill="#ee6666"/><rect x="827.59" y="1441.25" width="15.0" height="22.25" fill="#73c0de"/><rect x="827.59" y="1419.25" width="15.0" height="22.00" fill="#3ba272"/><rect x="827.59" y="1401.50" width="15.0" height="17.75" fill="#fc8452"/><rect x="827.59" y="1361.50" width="15.0" height="40.00" fill="#9a60b4"/><rect x="827.59" y="1356.75" width="15.0" height="4.75" fill="#ea7ccc"/><rect x="827.59" y="1317.25" width="15.0" height="39.50" fill="#8b4e91"/><rect x="849.12" y="1548.75" width="15.0" height="12.25" fill="#5470c6"/><rect x="849.12" y="1465.50" width="15.0" height="83.25" fill="#91cc75"/><rect x="849.12" y="1432.75" width="15.0" height="32.75" fill="#fac858"/><rect x="849.12" y="1392.50" width="15.0" height="40.25" fill="#ee6666"/><rect x="849.12" y="1374.75" width="15.0" height="17.75" fill="#73c0de"/><rect x="849.12" y="1361.50" width="15.0" height="13.25" fill="#3ba272"/><rect x="849.12" y="1340.50" width="15.0" height="21.00" fill="#fc8452"/><rect x="849.12" y="1309.25" width="15.0" height="31.25" fill="#9a60b4"/><rect x="849.12" y="1303.00" width="15.0" height="6.25" fill="#ea7ccc"/><rect x="849.12" y="1276.00" width="15.0" height="27.00" fill="#8b4e91"/><rect x="870.65" y="1555.25" width="15.0" height="5.75" fill="#5470c6"/><rect x="870.65" y="1506.50" width="15.0" height="48.75" fill="#91cc75"/><rect x="870.65" y="1493.50" width="15.0" height="13.00" fill="#fac858"/><rect x="870.65" y="1468.75" width="15.0" height="24.75" fill="#ee6666"/><rect x="870.65" y="1460.00" width="15.0" height="8.75" fill="#73c0de"/><rect x="870.65" y="1440.00" width="15.0" height="20.00" fill="#3ba272"/><rect x="870.65" y="1424.50" width="15.0" height="15.50" fill="#fc8452"/><rect x="870.65" y="1409.25" width="15.0" height="15.25" fill="#9a60b4"/><rect x="870.65" y="1400.50" width="15.0" height="8.75" fill="#ea7ccc"/><rect x="870.65" y="1380.25" width="15.0" height="20.25" fill="#8b4e91"/><rect x="892.19" y="1544.25" width="15.0" height="16.75" fill="#5470c6"/><rect x="892.19" y="1515.50" width="15.0" height="28.75" fill="#91cc75"/><rect x="892.19" y="1500.00" width="15.0" height="15.50" fill="#fac858"/><rect x="892.19" y="1450.00" width="15.0" height="50.00" fill="#ee6666"/><rect x="892.19" y="1436.50" width="15.0" height="13.50" fill="#73c0de"/><rect x="892.19" y="1410.25" width="15.0" height="26.25" fill="#3ba272"/><rect x="892.19" y="1403.50" width="15.0" height="6.75" fill="#fc8452"/><rect x="892.19" y="1381.25" width="15.0" height="22.25" fill="#9a60b4"/><rect x="892.19" y="1374.75" width="15.0" height="6.50" fill="#ea7ccc"/><rect x="892.19" y="1346.00" width="15.0" height="28.75" fill="#8b4e91"/><rect x="913.73" y="1544.25" width="15.0" height="16.75" fill="#5470c6"/><rect x="913.73" y="1522.00" width="15.0" height="22.25" fill="#91cc75"/><rect x="913.73" y="1515.50" width="15.0" height="6.50" fill="#fac858"/><rect x="913.73" y="1488.75" width="15.0" height="26.75" fill="#ee6666"/><rect x="913.73" y="1475.50" width="15.0" height="13.25" fill="#73c0de"/><rect x="913.73" y="1462.00" width="15.0" height="13.50" fill="#3ba272"/><rect x="913.73" y="1434.50" width="15.0" height="27.50" fill="#fc8452"/><rect x="913.73" y="1406.75" width="15.0" height="27.75" fill="#9a60b4"/><rect x="913.73" y="1401.50" width="15.0" height="5.25" fill="#ea7ccc"/><rect x="913.73" y="1371.00" width="15.0" height="30.50" fill="#8b4e91"/><rect x="935.26" y="1548.75" width="15.0" height="12.25" fill="#5470c6"/><rect x="935.26" y="1517.50" width="15.0" height="31.25" fill="#91cc75"/><rect x="935.26" y="1504.25" width="15.0" height="13.25" fill="#fac858"/><rect x="935.26" y="1486.50" width="15.0" height="17.75" fill="#ee6666"/><rect x="935.26" y="1473.50" width="15.0" height="13.00" fill="#73c0de"/><rect x="935.26" y="1466.75" width="15.0" height="6.75" fill="#3ba272"/><rect x="935.26" y="1462.25" width="15.0" height="4.50" fill="#fc8452"/><rect x="935.26" y="1441.00" width="15.0" height="21.25" fill="#9a60b4"/><rect x="935.26" y="1436.50" width="15.0" height="4.50" fill="#ea7ccc"/><rect x="935.26" y="1405.50" width="15.0" height="31.00" fill="#8b4e91"/><rect x="956.79" y="1551.00" width="15.0" height="10.00" fill="#5470c6"/><rect x="956.79" y="1502.00" width="15.0" height="49.00" fill="#91cc75"/><rect x="956.79" y="1482.25" width="15.0" height="19.75" fill="#fac858"/><rect x="956.79" y="1465.50" width="15.0" height="16.75" fill="#ee6666"/><rect x="956.79" y="1450.25" width="15.0" height="15.25" fill="#73c0de"/><rect x="956.79" y="1436.75" width="15.0" height="13.50" fill="#3ba272"/><rect x="956.79" y="1425.75" width="15.0" height="11.00" fill="#fc8452"/><rect x="956.79" y="1394.00" width="15.0" height="31.75" fill="#9a60b4"/><rect x="956.79" y="1390.50" width="15.0" height="3.50" fill="#ea7ccc"/><rect x="956.79" y="1369.00" width="15.0" height="21.50" fill="#8b4e91"/><rect x="978.33" y="1551.00" width="15.0" height="10.00" fill="#5470c6"/><rect x="978.33" y="1519.75" width="15.0" height="31.25" fill="#91cc75"/><rect x="978.33" y="1515.50" width="15.0" height="4.25" fill="#fac858"/><rect x="978.33" y="1500.00" width="15.0" height="15.50" fill="#ee6666"/><rect x="978.33" y="1477.75" width="15.0" height="22.25" fill="#73c0de"/><rect x="978.33" y="1468.75" width="15.0" height="9.00" fill="#3ba272"/><rect x="978.33" y="1440.00" width="15.0" height="28.75" fill="#fc8452"/><rect x="978.33" y="1419.00" width="15.0" height="21.00" fill="#9a60b4"/><rect x="978.33" y="1413.50" width="15.0" height="5.50" fill="#ea7ccc"/><rect x="978.33" y="1399.00" width="15.0" height="14.50" fill="#8b4e91"/><rect x="999.87" y="1551.00" width="15.0" height="10.00" fill="#5470c6"/><rect x="999.87" y="1519.75" width="15.0" height="31.25" fill="#91cc75"/><rect x="999.87" y="1506.50" width="15.0" height="13.25" fill="#fac858"/><rect x="999.87" y="1484.25" width="15.0" height="22.25" fill="#ee6666"/><rect x="999.87" y="1453.50" width="15.0" height="30.75" fill="#73c0de"/><rect x="999.87" y="1442.50" width="15.0" height="11.00" fill="#3ba272"/><rect x="999.87" y="1424.50" width="15.0" height="18.00" fill="#fc8452"/><rect x="999.87" y="1404.00" width="15.0" height="20.50" fill="#9a60b4"/><rect x="999.87" y="1400.50" width="15.0" height="3.50" fill="#ea7ccc"/><rect x="999.87" y="1387.00" width="15.0" height="13.50" fill="#8b4e91"/><rect x="1021.40" y="1531.00" width="15.0" height="30.00" fill="#5470c6"/><rect x="1021.40" y="1500.00" width="15.0" height="31.00" fill="#91cc75"/><rect x="1021.40" y="1493.50" width="15.0" height="6.50" fill="#fac858"/><rect x="1021.40" y="1453.50" width="15.0" height="40.00" fill="#ee6666"/><rect x="1021.40" y="1416.00" width="15.0" height="37.50" fill="#73c0de"/><rect x="1021.40" y="1391.50" width="15.0" height="24.50" fill="#3ba272"/><rect x="1021.40" y="1371.50" width="15.0" height="20.00" fill="#fc8452"/><rect x="1021.40" y="1333.75" width="15.0" height="37.75" fill="#9a60b4"/><rect x="1021.40" y="1327.25" width="15.0" height="6.50" fill="#ea7ccc"/><rect x="1021.40" y="1311.50" width="15.0" height="15.75" fill="#8b4e91"/><rect x="1042.93" y="1544.25" width="15.0" height="16.75" fill="#5470c6"/><rect x="1042.93" y="1504.25" width="15.0" height="40.00" fill="#91cc75"/><rect x="1042.93" y="1495.50" width="15.0" height="8.75" fill="#fac858"/><rect x="1042.93" y="1452.50" width="15.0" height="43.00" fill="#ee6666"/><rect x="1042.93" y="1439.00" width="15.0" height="13.50" fill="#73c0de"/><rect x="1042.93" y="1414.75" width="15.0" height="24.25" fill="#3ba272"/><rect x="1042.93" y="1399.25" width="15.0" height="15.50" fill="#fc8452"/><rect x="1042.93" y="1366.00" width="15.0" height="33.25" fill="#9a60b4"/><rect x="1042.93" y="1360.75" width="15.0" height="5.25" fill="#ea7ccc"/><rect x="1042.93" y="1330.50" width="15.0" height="30.25" fill="#8b4e91"/><rect x="1064.47" y="1546.50" width="15.0" height="14.50" fill="#5470c6"/><rect x="1064.47" y="1508.50" width="15.0" height="38.00" fill="#91cc75"/><rect x="1064.47" y="1499.75" width="15.0" height="8.75" fill="#fac858"/><rect x="1064.47" y="1471.25" width="15.0" height="28.50" fill="#ee6666"/><rect x="1064.47" y="1460.00" width="15.0" height="11.25" fill="#73c0de"/><rect x="1064.47" y="1431.25" width="15.0" height="28.75" fill="#3ba272"/><rect x="1064.47" y="1425.50" width="15.0" height="5.75" fill="#fc8452"/><rect x="1064.47" y="1405.50" width="15.0" height="20.00" fill="#9a60b4"/><rect x="1064.47" y="1400.75" width="15.0" height="4.75" fill="#ea7ccc"/><rect x="1064.47" y="1379.00" width="15.0" height="21.75" fill="#8b4e91"/><rect x="1086.01" y="1547.25" width="15.0" height="13.75" fill="#5470c6"/><rect x="1086.01" y="1517.50" width="15.0" height="29.75" fill="#91cc75"/><rect x="1086.01" y="1506.50" width="15.0" height="11.00" fill="#fac858"/><rect x="1086.01" y="1457.75" width="15.0" height="48.75" fill="#ee6666"/><rect x="1086.01" y="1444.50" width="15.0" height="13.25" fill="#73c0de"/><rect x="1086.01" y="1415.75" width="15.0" height="28.75" fill="#3ba272"/><rect x="1086.01" y="1402.50" width="15.0" height="13.25" fill="#fc8452"/><rect x="1086.01" y="1372.25" width="15.0" height="30.25" fill="#9a60b4"/><rect x="1086.01" y="1362.75" width="15.0" height="9.50" fill="#ea7ccc"/><rect x="1086.01" y="1343.50" width="15.0" height="19.25" fill="#8b4e91"/><rect x="1107.54" y="1548.75" width="15.0" height="12.25" fill="#5470c6"/><rect x="1107.54" y="1483.50" width="15.0" height="65.25" fill="#91cc75"/><rect x="1107.54" y="1476.25" width="15.0" height="7.25" fill="#fac858"/><rect x="1107.54" y="1441.25" width="15.0" height="35.00" fill="#ee6666"/><rect x="1107.54" y="1422.50" width="15.0" height="18.75" fill="#73c0de"/><rect x="1107.54" y="1402.50" width="15.0" height="20.00" fill="#3ba272"/><rect x="1107.54" y="1384.75" width="15.0" height="17.75" fill="#fc8452"/><rect x="1107.54" y="1355.75" width="15.0" height="29.00" fill="#9a60b4"/><rect x="1107.54" y="1346.00" width="15.0" height="9.75" fill="#ea7ccc"/><rect x="1107.54" y="1312.75" width="15.0" height="33.25" fill="#8b4e91"/><rect x="1129.08" y="1537.50" width="15.0" height="23.50" fill="#5470c6"/><rect x="1129.08" y="1482.25" width="15.0" height="55.25" fill="#91cc75"/><rect x="1129.08" y="1471.25" width="15.0" height="11.00" fill="#fac858"/><rect x="1129.08" y="1426.75" width="15.0" height="44.50" fill="#ee6666"/><rect x="1129.08" y="1406.75" width="15.0" height="20.00" fill="#73c0de"/><rect x="1129.08" y="1391.50" width="15.0" height="15.25" fill="#3ba272"/><rect x="1129.08" y="1382.75" width="15.0" height="8.75" fill="#fc8452"/><rect x="1129.08" y="1369.00" width="15.0" height="13.75" fill="#9a60b4"/><rect x="1129.08" y="1363.50" width="15.0" height="5.50" fill="#ea7ccc"/><rect x="1129.08" y="1348.00" width="15.0" height="15.50" fill="#8b4e91"/><rect x="1150.61" y="1542.00" width="15.0" height="19.00" fill="#5470c6"/><rect x="1150.61" y="1495.25" width="15.0" height="46.75" fill="#91cc75"/><rect x="1150.61" y="1475.50" width="15.0" height="19.75" fill="#fac858"/><rect x="1150.61" y="1426.75" width="15.0" height="48.75" fill="#ee6666"/><rect x="1150.61" y="1398.00" width="15.0" height="28.75" fill="#73c0de"/><rect x="1150.61" y="1373.50" width="15.0" height="24.50" fill="#3ba272"/><rect x="1150.61" y="1345.00" width="15.0" height="28.50" fill="#fc8452"/><rect x="1150.61" y="1313.75" width="15.0" height="31.25" fill="#9a60b4"/><rect x="1150.61" y="1269.75" width="15.0" height="44.00" fill="#ea7ccc"/><rect x="1150.61" y="1234.00" width="15.0" height="35.75" fill="#8b4e91"/><rect x="1172.14" y="1531.00" width="15.0" height="30.00" fill="#5470c6"/><rect x="1172.14" y="1464.50" width="15.0" height="66.50" fill="#91cc75"/><rect x="1172.14" y="1451.25" width="15.0" height="13.25" fill="#fac858"/><rect x="1172.14" y="1409.00" width="15.0" height="42.25" fill="#ee6666"/><rect x="1172.14" y="1395.75" width="15.0" height="13.25" fill="#73c0de"/><rect x="1172.14" y="1367.00" width="15.0" height="28.75" fill="#3ba272"/><rect x="1172.14" y="1347.25" width="15.0" height="19.75" fill="#fc8452"/><rect x="1172.14" y="1325.00" width="15.0" height="22.25" fill="#9a60b4"/><rect x="1172.14" y="1233.00" width="15.0" height="92.00" fill="#ea7ccc"/><rect x="1172.14" y="1208.50" width="15.0" height="24.50" fill="#8b4e91"/><rect x="1193.68" y="1542.00" width="15.0" height="19.00" fill="#5470c6"/><rect x="1193.68" y="1468.75" width="15.0" height="73.25" fill="#91cc75"/><rect x="1193.68" y="1453.50" width="15.0" height="15.25" fill="#fac858"/><rect x="1193.68" y="1408.00" width="15.0" height="45.50" fill="#ee6666"/><rect x="1193.68" y="1377.00" width="15.0" height="31.00" fill="#73c0de"/><rect x="1193.68" y="1357.00" width="15.0" height="20.00" fill="#3ba272"/><rect x="1193.68" y="1338.25" width="15.0" height="18.75" fill="#fc8452"/><rect x="1193.68" y="1316.25" width="15.0" height="22.00" fill="#9a60b4"/><rect x="1193.68" y="1301.75" width="15.0" height="14.50" fill="#ea7ccc"/><rect x="1193.68" y="1266.00" width="15.0" height="35.75" fill="#8b4e91"/><rect x="1215.21" y="1537.50" width="15.0" height="23.50" fill="#5470c6"/><rect x="1215.21" y="1465.50" width="15.0" height="72.00" fill="#91cc75"/><rect x="1215.21" y="1447.75" width="15.0" height="17.75" fill="#fac858"/><rect x="1215.21" y="1390.25" width="15.0" height="57.50" fill="#ee6666"/><rect x="1215.21" y="1361.50" width="15.0" height="28.75" fill="#73c0de"/><rect x="1215.21" y="1326.25" width="15.0" height="35.25" fill="#3ba272"/><rect x="1215.21" y="1315.00" width="15.0" height="11.25" fill="#fc8452"/><rect x="1215.21" y="1277.25" width="15.0" height="37.75" fill="#9a60b4"/><rect x="1215.21" y="1265.25" width="15.0" height="12.00" fill="#ea7ccc"/><rect x="1215.21" y="1229.75" width="15.0" height="35.50" fill="#8b4e91"/><rect x="1236.75" y="1528.75" width="15.0" height="32.25" fill="#5470c6"/><rect x="1236.75" y="1464.75" width="15.0" height="64.00" fill="#91cc75"/><rect x="1236.75" y="1451.25" width="15.0" height="13.50" fill="#fac858"/><rect x="1236.75" y="1382.75" width="15.0" height="68.50" fill="#ee6666"/><rect x="1236.75" y="1360.50" width="15.0" height="22.25" fill="#73c0de"/><rect x="1236.75" y="1340.50" width="15.0" height="20.00" fill="#3ba272"/><rect x="1236.75" y="1329.50" width="15.0" height="11.00" fill="#fc8452"/><rect x="1236.75" y="1276.25" width="15.0" height="53.25" fill="#9a60b4"/><rect x="1236.75" y="1263.00" width="15.0" height="13.25" fill="#ea7ccc"/><rect x="1236.75" y="1237.25" width="15.0" height="25.75" fill="#8b4e91"/><rect x="1258.29" y="1515.50" width="15.0" height="45.50" fill="#5470c6"/><rect x="1258.29" y="1442.50" width="15.0" height="73.00" fill="#91cc75"/><rect x="1258.29" y="1406.75" width="15.0" height="35.75" fill="#fac858"/><rect x="1258.29" y="1332.75" width="15.0" height="74.00" fill="#ee6666"/><rect x="1258.29" y="1301.75" width="15.0" height="31.00" fill="#73c0de"/><rect x="1258.29" y="1259.50" width="15.0" height="42.25" fill="#3ba272"/><rect x="1258.29" y="1213.25" width="15.0" height="46.25" fill="#fc8452"/><rect x="1258.29" y="1184.25" width="15.0" height="29.00" fill="#9a60b4"/><rect x="1258.29" y="932.50" width="15.0" height="251.75" fill="#ea7ccc"/><rect x="1258.29" y="882.10" width="15.0" height="50.40" fill="#8b4e91"/><rect x="1279.82" y="1528.75" width="15.0" height="32.25" fill="#5470c6"/><rect x="1279.82" y="1471.25" width="15.0" height="57.50" fill="#91cc75"/><rect x="1279.82" y="1460.00" width="15.0" height="11.25" fill="#fac858"/><rect x="1279.82" y="1402.50" width="15.0" height="57.50" fill="#ee6666"/><rect x="1279.82" y="1382.75" width="15.0" height="19.75" fill="#73c0de"/><rect x="1279.82" y="1359.25" width="15.0" height="23.50" fill="#3ba272"/><rect x="1279.82" y="1328.50" width="15.0" height="30.75" fill="#fc8452"/><rect x="1279.82" y="1281.50" width="15.0" height="47.00" fill="#9a60b4"/><rect x="1279.82" y="1268.75" width="15.0" height="12.75" fill="#ea7ccc"/><rect x="1279.82" y="1244.00" width="15.0" height="24.75" fill="#8b4e91"/><rect x="1301.36" y="1524.25" width="15.0" height="36.75" fill="#5470c6"/><rect x="1301.36" y="1480.00" width="15.0" height="44.25" fill="#91cc75"/><rect x="1301.36" y="1457.75" width="15.0" height="22.25" fill="#fac858"/><rect x="1301.36" y="1403.50" width="15.0" height="54.25" fill="#ee6666"/><rect x="1301.36" y="1385.75" width="15.0" height="17.75" fill="#73c0de"/><rect x="1301.36" y="1369.00" width="15.0" height="16.75" fill="#3ba272"/><rect x="1301.36" y="1355.75" width="15.0" height="13.25" fill="#fc8452"/><rect x="1301.36" y="1320.25" width="15.0" height="35.50" fill="#9a60b4"/><rect x="1301.36" y="1295.00" width="15.0" height="25.25" fill="#ea7ccc"/><rect x="1301.36" y="1277.25" width="15.0" height="17.75" fill="#8b4e91"/><rect x="1322.89" y="1534.25" width="15.0" height="26.75" fill="#5470c6"/><rect x="1322.89" y="1463.50" width="15.0" height="70.75" fill="#91cc75"/><rect x="1322.89" y="1434.50" width="15.0" height="29.00" fill="#fac858"/><rect x="1322.89" y="1368.25" width="15.0" height="66.25" fill="#ee6666"/><rect x="1322.89" y="1352.75" width="15.0" height="15.50" fill="#73c0de"/><rect x="1322.89" y="1329.50" width="15.0" height="23.25" fill="#3ba272"/><rect x="1322.89" y="1311.75" width="15.0" height="17.75" fill="#fc8452"/><rect x="1322.89" y="1296.25" width="15.0" height="15.50" fill="#9a60b4"/><rect x="1322.89" y="1176.00" width="15.0" height="120.25" fill="#ea7ccc"/><rect x="1322.89" y="1140.30" width="15.0" height="35.70" fill="#8b4e91"/><rect x="1344.42" y="1539.75" width="15.0" height="21.25" fill="#5470c6"/><rect x="1344.42" y="1470.00" width="15.0" height="69.75" fill="#91cc75"/><rect x="1344.42" y="1443.50" width="15.0" height="26.50" fill="#fac858"/><rect x="1344.42" y="1374.75" width="15.0" height="68.75" fill="#ee6666"/><rect x="1344.42" y="1342.75" width="15.0" height="32.00" fill="#73c0de"/><rect x="1344.42" y="1321.50" width="15.0" height="21.25" fill="#3ba272"/><rect x="1344.42" y="1312.75" width="15.0" height="8.75" fill="#fc8452"/><rect x="1344.42" y="1299.25" width="15.0" height="13.50" fill="#9a60b4"/><rect x="1344.42" y="1268.75" width="15.0" height="30.50" fill="#ea7ccc"/><rect x="1344.42" y="1228.75" width="15.0" height="40.00" fill="#8b4e91"/><rect x="1365.96" y="1534.25" width="15.0" height="26.75" fill="#5470c6"/><rect x="1365.96" y="1472.25" width="15.0" height="62.00" fill="#91cc75"/><rect x="1365.96" y="1452.50" width="15.0" height="19.75" fill="#fac858"/><rect x="1365.96" y="1397.00" width="15.0" height="55.50" fill="#ee6666"/><rect x="1365.96" y="1374.75" width="15.0" height="22.25" fill="#73c0de"/><rect x="1365.96" y="1358.00" width="15.0" height="16.75" fill="#3ba272"/><rect x="1365.96" y="1351.50" width="15.0" height="6.50" fill="#fc8452"/><rect x="1365.96" y="1329.00" width="15.0" height="22.50" fill="#9a60b4"/><rect x="1365.96" y="1293.75" width="15.0" height="35.25" fill="#ea7ccc"/><rect x="1365.96" y="1254.00" width="15.0" height="39.75" fill="#8b4e91"/><rect x="1387.50" y="1546.25" width="15.0" height="14.75" fill="#5470c6"/><rect x="1387.50" y="1504.50" width="15.0" height="41.75" fill="#91cc75"/><rect x="1387.50" y="1495.50" width="15.0" height="9.00" fill="#fac858"/><rect x="1387.50" y="1440.00" width="15.0" height="55.50" fill="#ee6666"/><rect x="1387.50" y="1422.50" width="15.0" height="17.50" fill="#73c0de"/><rect x="1387.50" y="1406.75" width="15.0" height="15.75" fill="#3ba272"/><rect x="1387.50" y="1381.50" width="15.0" height="25.25" fill="#fc8452"/><rect x="1387.50" y="1352.50" width="15.0" height="29.00" fill="#9a60b4"/><rect x="1387.50" y="1322.75" width="15.0" height="29.75" fill="#ea7ccc"/><rect x="1387.50" y="1288.50" width="15.0" height="34.25" fill="#8b4e91"/><rect x="1409.03" y="1544.00" width="15.0" height="17.00" fill="#5470c6"/><rect x="1409.03" y="1491.00" width="15.0" height="53.00" fill="#91cc75"/><rect x="1409.03" y="1482.25" width="15.0" height="8.75" fill="#fac858"/><rect x="1409.03" y="1455.50" width="15.0" height="26.75" fill="#ee6666"/><rect x="1409.03" y="1433.50" width="15.0" height="22.00" fill="#73c0de"/><rect x="1409.03" y="1414.75" width="15.0" height="18.75" fill="#3ba272"/><rect x="1409.03" y="1393.75" width="15.0" height="21.00" fill="#fc8452"/><rect x="1409.03" y="1367.25" width="15.0" height="26.50" fill="#9a60b4"/><rect x="1409.03" y="1328.50" width="15.0" height="38.75" fill="#ea7ccc"/><rect x="1409.03" y="1309.50" width="15.0" height="19.00" fill="#8b4e91"/><rect x="1430.57" y="1544.00" width="15.0" height="17.00" fill="#5470c6"/><rect x="1430.57" y="1524.25" width="15.0" height="19.75" fill="#91cc75"/><rect x="1430.57" y="1515.50" width="15.0" height="8.75" fill="#fac858"/><rect x="1430.57" y="1474.25" width="15.0" height="41.25" fill="#ee6666"/><rect x="1430.57" y="1460.00" width="15.0" height="14.25" fill="#73c0de"/><rect x="1430.57" y="1448.75" width="15.0" height="11.25" fill="#3ba272"/><rect x="1430.57" y="1411.50" width="15.0" height="37.25" fill="#fc8452"/><rect x="1430.57" y="1371.50" width="15.0" height="40.00" fill="#9a60b4"/><rect x="1430.57" y="1340.50" width="15.0" height="31.00" fill="#ea7ccc"/><rect x="1430.57" y="1309.50" width="15.0" height="31.00" fill="#8b4e91"/><rect x="1452.10" y="1533.25" width="15.0" height="27.75" fill="#5470c6"/><rect x="1452.10" y="1484.25" width="15.0" height="49.00" fill="#91cc75"/><rect x="1452.10" y="1468.75" width="15.0" height="15.50" fill="#fac858"/><rect x="1452.10" y="1419.25" width="15.0" height="49.50" fill="#ee6666"/><rect x="1452.10" y="1403.75" width="15.0" height="15.50" fill="#73c0de"/><rect x="1452.10" y="1383.50" width="15.0" height="20.25" fill="#3ba272"/><rect x="1452.10" y="1371.50" width="15.0" height="12.00" fill="#fc8452"/><rect x="1452.10" y="1311.50" width="15.0" height="60.00" fill="#9a60b4"/><rect x="1452.10" y="1277.75" width="15.0" height="33.75" fill="#ea7ccc"/><rect x="1452.10" y="1227.50" width="15.0" height="50.25" fill="#8b4e91"/><rect x="1473.63" y="1543.00" width="15.0" height="18.00" fill="#5470c6"/><rect x="1473.63" y="1501.00" width="15.0" height="42.00" fill="#91cc75"/><rect x="1473.63" y="1481.00" width="15.0" height="20.00" fill="#fac858"/><rect x="1473.63" y="1438.00" width="15.0" height="43.00" fill="#ee6666"/><rect x="1473.63" y="1417.75" width="15.0" height="20.25" fill="#73c0de"/><rect x="1473.63" y="1393.50" width="15.0" height="24.25" fill="#3ba272"/><rect x="1473.63" y="1378.00" width="15.0" height="15.50" fill="#fc8452"/><rect x="1473.63" y="1356.00" width="15.0" height="22.00" fill="#9a60b4"/><rect x="1473.63" y="1279.50" width="15.0" height="76.50" fill="#ea7ccc"/><rect x="1473.63" y="1262.00" width="15.0" height="17.50" fill="#8b4e91"/><rect x="1495.17" y="1532.00" width="15.0" height="29.00" fill="#5470c6"/><rect x="1495.17" y="1490.00" width="15.0" height="42.00" fill="#91cc75"/><rect x="1495.17" y="1478.75" width="15.0" height="11.25" fill="#fac858"/><rect x="1495.17" y="1428.00" width="15.0" height="50.75" fill="#ee6666"/><rect x="1495.17" y="1408.00" width="15.0" height="20.00" fill="#73c0de"/><rect x="1495.17" y="1388.25" width="15.0" height="19.75" fill="#3ba272"/><rect x="1495.17" y="1368.25" width="15.0" height="20.00" fill="#fc8452"/><rect x="1495.17" y="1337.25" width="15.0" height="31.00" fill="#9a60b4"/><rect x="1495.17" y="1265.25" width="15.0" height="72.00" fill="#ea7ccc"/><rect x="1495.17" y="1249.75" width="15.0" height="15.50" fill="#8b4e91"/><rect x="1516.70" y="1546.25" width="15.0" height="14.75" fill="#5470c6"/><rect x="1516.70" y="1502.00" width="15.0" height="44.25" fill="#91cc75"/><rect x="1516.70" y="1477.75" width="15.0" height="24.25" fill="#fac858"/><rect x="1516.70" y="1446.75" width="15.0" height="31.00" fill="#ee6666"/><rect x="1516.70" y="1437.75" width="15.0" height="9.00" fill="#73c0de"/><rect x="1516.70" y="1411.25" width="15.0" height="26.50" fill="#3ba272"/><rect x="1516.70" y="1404.75" width="15.0" height="6.50" fill="#fc8452"/><rect x="1516.70" y="1380.25" width="15.0" height="24.50" fill="#9a60b4"/><rect x="1516.70" y="1339.75" width="15.0" height="40.50" fill="#ea7ccc"/><rect x="1516.70" y="1313.00" width="15.0" height="26.75" fill="#8b4e91"/><rect x="1538.24" y="1526.50" width="15.0" height="34.50" fill="#5470c6"/><rect x="1538.24" y="1454.25" width="15.0" height="72.25" fill="#91cc75"/><rect x="1538.24" y="1427.75" width="15.0" height="26.50" fill="#fac858"/><rect x="1538.24" y="1368.25" width="15.0" height="59.50" fill="#ee6666"/><rect x="1538.24" y="1349.50" width="15.0" height="18.75" fill="#73c0de"/><rect x="1538.24" y="1316.00" width="15.0" height="33.50" fill="#3ba272"/><rect x="1538.24" y="1300.50" width="15.0" height="15.50" fill="#fc8452"/><rect x="1538.24" y="1260.50" width="15.0" height="40.00" fill="#9a60b4"/><rect x="1538.24" y="1227.75" width="15.0" height="32.75" fill="#ea7ccc"/><rect x="1538.24" y="1202.00" width="15.0" height="25.75" fill="#8b4e91"/><rect x="1559.78" y="1522.00" width="15.0" height="39.00" fill="#5470c6"/><rect x="1559.78" y="1423.50" width="15.0" height="98.50" fill="#91cc75"/><rect x="1559.78" y="1416.75" width="15.0" height="6.75" fill="#fac858"/><rect x="1559.78" y="1351.50" width="15.0" height="65.25" fill="#ee6666"/><rect x="1559.78" y="1316.00" width="15.0" height="35.50" fill="#73c0de"/><rect x="1559.78" y="1275.25" width="15.0" height="40.75" fill="#3ba272"/><rect x="1559.78" y="1252.75" width="15.0" height="22.50" fill="#fc8452"/><rect x="1559.78" y="1213.25" width="15.0" height="39.50" fill="#9a60b4"/><rect x="1559.78" y="1198.75" width="15.0" height="14.50" fill="#ea7ccc"/><rect x="1559.78" y="1172.25" width="15.0" height="26.50" fill="#8b4e91"/><rect x="1581.31" y="1528.75" width="15.0" height="32.25" fill="#5470c6"/><rect x="1581.31" y="1475.50" width="15.0" height="53.25" fill="#91cc75"/><rect x="1581.31" y="1446.75" width="15.0" height="28.75" fill="#fac858"/><rect x="1581.31" y="1409.00" width="15.0" height="37.75" fill="#ee6666"/><rect x="1581.31" y="1390.50" width="15.0" height="18.50" fill="#73c0de"/><rect x="1581.31" y="1359.00" width="15.0" height="31.50" fill="#3ba272"/><rect x="1581.31" y="1326.25" width="15.0" height="32.75" fill="#fc8452"/><rect x="1581.31" y="1286.25" width="15.0" height="40.00" fill="#9a60b4"/><rect x="1581.31" y="1275.25" width="15.0" height="11.00" fill="#ea7ccc"/><rect x="1581.31" y="1229.75" width="15.0" height="45.50" fill="#8b4e91"/><rect x="1602.85" y="1526.50" width="15.0" height="34.50" fill="#5470c6"/><rect x="1602.85" y="1431.25" width="15.0" height="95.25" fill="#91cc75"/><rect x="1602.85" y="1406.75" width="15.0" height="24.50" fill="#fac858"/><rect x="1602.85" y="1354.75" width="15.0" height="52.00" fill="#ee6666"/><rect x="1602.85" y="1334.75" width="15.0" height="20.00" fill="#73c0de"/><rect x="1602.85" y="1286.25" width="15.0" height="48.50" fill="#3ba272"/><rect x="1602.85" y="1255.25" width="15.0" height="31.00" fill="#fc8452"/><rect x="1602.85" y="1209.50" width="15.0" height="45.75" fill="#9a60b4"/><rect x="1602.85" y="1204.75" width="15.0" height="4.75" fill="#ea7ccc"/><rect x="1602.85" y="1174.00" width="15.0" height="30.75" fill="#8b4e91"/><rect x="1624.38" y="1516.50" width="15.0" height="44.50" fill="#5470c6"/><rect x="1624.38" y="1460.00" width="15.0" height="56.50" fill="#91cc75"/><rect x="1624.38" y="1424.50" width="15.0" height="35.50" fill="#fac858"/><rect x="1624.38" y="1356.00" width="15.0" height="68.50" fill="#ee6666"/><rect x="1624.38" y="1327.50" width="15.0" height="28.50" fill="#73c0de"/><rect x="1624.38" y="1304.00" width="15.0" height="23.50" fill="#3ba272"/><rect x="1624.38" y="1268.75" width="15.0" height="35.25" fill="#fc8452"/><rect x="1624.38" y="1217.25" width="15.0" height="51.50" fill="#9a60b4"/><rect x="1624.38" y="1203.00" width="15.0" height="14.25" fill="#ea7ccc"/><rect x="1624.38" y="1163.25" width="15.0" height="39.75" fill="#8b4e91"/><rect x="1645.91" y="1511.00" width="15.0" height="50.00" fill="#5470c6"/><rect x="1645.91" y="1444.50" width="15.0" height="66.50" fill="#91cc75"/><rect x="1645.91" y="1424.50" width="15.0" height="20.00" fill="#fac858"/><rect x="1645.91" y="1368.25" width="15.0" height="56.25" fill="#ee6666"/><rect x="1645.91" y="1343.50" width="15.0" height="24.75" fill="#73c0de"/><rect x="1645.91" y="1304.00" width="15.0" height="39.50" fill="#3ba272"/><rect x="1645.91" y="1270.75" width="15.0" height="33.25" fill="#fc8452"/><rect x="1645.91" y="1234.25" width="15.0" height="36.50" fill="#9a60b4"/><rect x="1645.91" y="1229.75" width="15.0" height="4.50" fill="#ea7ccc"/><rect x="1645.91" y="1209.75" width="15.0" height="20.00" fill="#8b4e91"/><rect x="1667.45" y="1526.50" width="15.0" height="34.50" fill="#5470c6"/><rect x="1667.45" y="1455.50" width="15.0" height="71.00" fill="#91cc75"/><rect x="1667.45" y="1417.75" width="15.0" height="37.75" fill="#fac858"/><rect x="1667.45" y="1359.50" width="15.0" height="58.25" fill="#ee6666"/><rect x="1667.45" y="1332.75" width="15.0" height="26.75" fill="#73c0de"/><rect x="1667.45" y="1282.75" width="15.0" height="50.00" fill="#3ba272"/><rect x="1667.45" y="1238.50" width="15.0" height="44.25" fill="#fc8452"/><rect x="1667.45" y="1174.25" width="15.0" height="64.25" fill="#9a60b4"/><rect x="1667.45" y="1160.90" width="15.0" height="13.35" fill="#ea7ccc"/><rect x="1667.45" y="1052.50" width="15.0" height="108.40" fill="#8b4e91"/><rect x="1688.98" y="1551.00" width="15.0" height="10.00" fill="#5470c6"/><rect x="1688.98" y="1503.25" width="15.0" height="47.75" fill="#91cc75"/><rect x="1688.98" y="1481.00" width="15.0" height="22.25" fill="#fac858"/><rect x="1688.98" y="1433.50" width="15.0" height="47.50" fill="#ee6666"/><rect x="1688.98" y="1424.50" width="15.0" height="9.00" fill="#73c0de"/><rect x="1688.98" y="1392.50" width="15.0" height="32.00" fill="#3ba272"/><rect x="1688.98" y="1381.50" width="15.0" height="11.00" fill="#fc8452"/><rect x="1688.98" y="1357.00" width="15.0" height="24.50" fill="#9a60b4"/><rect x="1688.98" y="1351.50" width="15.0" height="5.50" fill="#ea7ccc"/><rect x="1688.98" y="1272.00" width="15.0" height="79.50" fill="#8b4e91"/><rect x="160" y="1561" width="1544" height="2" fill="#4a464c"/></svg>
<div class="t" style="left:127.50px;width:80px;text-align:center;top:1587.58px;font-size:24px;line-height:24px;color:#524e56;font-family:'Liberation Sans',sans-serif">3/3</div>
<div class="t" style="left:515.13px;width:80px;text-align:center;top:1587.58px;font-size:24px;line-height:24px;color:#524e56;font-family:'Liberation Sans',sans-serif">3/4</div>
<div class="t" style="left:902.76px;width:80px;text-align:center;top:1587.58px;font-size:24px;line-height:24px;color:#524e56;font-family:'Liberation Sans',sans-serif">3/5</div>
<div class="t" style="left:1290.39px;width:80px;text-align:center;top:1587.58px;font-size:24px;line-height:24px;color:#524e56;font-family:'Liberation Sans',sans-serif">3/6</div>
</body></html>
